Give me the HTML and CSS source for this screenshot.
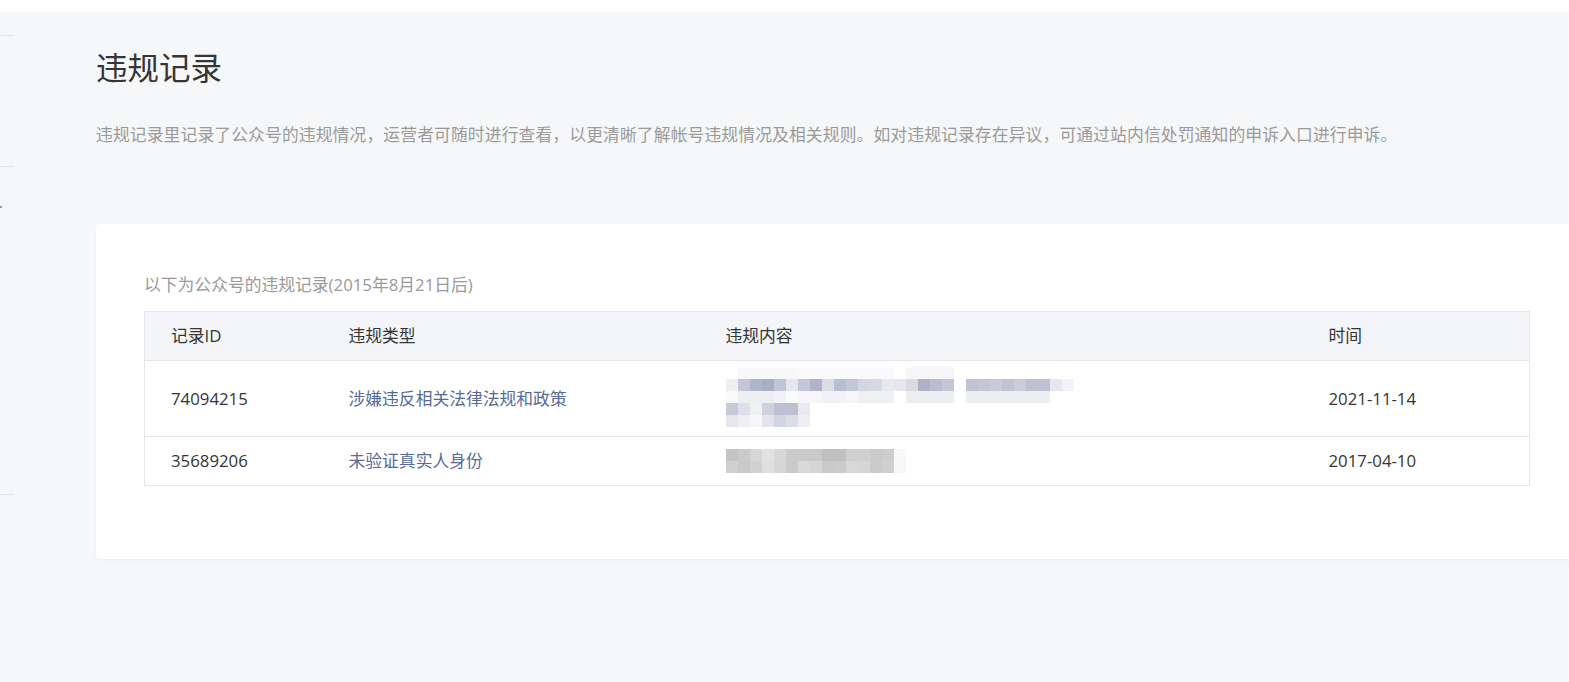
FILE: index.html
```html
<!DOCTYPE html>
<html>
<head>
    <meta charset="UTF-8">
    <title>违规记录</title>
    <link rel="stylesheet" href="styles.css">
</head>
<body>
    <div class="topbar"></div>
    <div class="layout">
        <div class="side">
            <div class="side-item first"></div>
            <div class="side-item second"></div>
            <div class="side-item third"><span class="dot"></span></div>
        </div>
        <div class="main">
            <h2 class="title">违规记录</h2>
            <p class="desc">违规记录里记录了公众号的违规情况，运营者可随时进行查看，以更清晰了解帐号违规情况及相关规则。如对违规记录存在异议，可通过站内信处罚通知的申诉入口进行申诉。</p>
            <div class="card">
                <p class="sub">以下为公众号的违规记录(2015年8月21日后)</p>
                <table class="list">
                    <colgroup>
                        <col class="c-id">
                        <col class="c-type">
                        <col class="c-content">
                        <col>
                    </colgroup>
                    <tr class="head">
                        <td>记录ID</td>
                        <td>违规类型</td>
                        <td>违规内容</td>
                        <td>时间</td>
                    </tr>
                    <tr>
                        <td>74094215</td>
                        <td><a href="#">涉嫌违反相关法律法规和政策</a></td>
                        <td class="mosaic-cell tall">
                            <!--打码内容-->
                            <svg class="mosaic" width="360" height="60" viewBox="0 0 360 60">
                                <rect x="12" y="0" width="60" height="12" fill="#f8f8fa"/>
                                <rect x="72" y="0" width="96" height="12" fill="#fafafc"/>
                                <rect x="180" y="0" width="48" height="12" fill="#f6f6f8"/>
                                <rect x="0" y="12" width="12" height="12" fill="#efeff2"/>
                                <rect x="12" y="12" width="12" height="12" fill="#c4c5d6"/>
                                <rect x="24" y="12" width="12" height="12" fill="#b0b5cb"/>
                                <rect x="36" y="12" width="12" height="12" fill="#a9adc6"/>
                                <rect x="48" y="12" width="12" height="12" fill="#c0c4d4"/>
                                <rect x="60" y="12" width="12" height="12" fill="#e6e7ee"/>
                                <rect x="72" y="12" width="12" height="12" fill="#c4c7d8"/>
                                <rect x="84" y="12" width="12" height="12" fill="#b0b3cb"/>
                                <rect x="96" y="12" width="12" height="12" fill="#dcdce4"/>
                                <rect x="108" y="12" width="12" height="12" fill="#b9bdd1"/>
                                <rect x="120" y="12" width="12" height="12" fill="#c4c7d8"/>
                                <rect x="132" y="12" width="12" height="12" fill="#d4d6e2"/>
                                <rect x="144" y="12" width="12" height="12" fill="#d6d9e4"/>
                                <rect x="156" y="12" width="12" height="12" fill="#e8e9ef"/>
                                <rect x="168" y="12" width="12" height="12" fill="#e6e7ee"/>
                                <rect x="180" y="12" width="12" height="12" fill="#d9d9e2"/>
                                <rect x="192" y="12" width="12" height="12" fill="#b0b1c9"/>
                                <rect x="204" y="12" width="12" height="12" fill="#babdd1"/>
                                <rect x="216" y="12" width="12" height="12" fill="#c4c6d6"/>
                                <rect x="240" y="12" width="12" height="12" fill="#c0c3d4"/>
                                <rect x="252" y="12" width="12" height="12" fill="#c4c6d6"/>
                                <rect x="264" y="12" width="12" height="12" fill="#c8cbd9"/>
                                <rect x="276" y="12" width="12" height="12" fill="#c1c3d4"/>
                                <rect x="288" y="12" width="12" height="12" fill="#cbcdd9"/>
                                <rect x="300" y="12" width="12" height="12" fill="#bec1d2"/>
                                <rect x="312" y="12" width="12" height="12" fill="#bfc2d3"/>
                                <rect x="324" y="12" width="12" height="12" fill="#e6e7ee"/>
                                <rect x="336" y="12" width="12" height="12" fill="#f2f3f7"/>
                                <rect x="0" y="24" width="12" height="12" fill="#f9f9fb"/>
                                <rect x="12" y="24" width="36" height="12" fill="#eeeff3"/>
                                <rect x="48" y="24" width="12" height="12" fill="#f1f2f5"/>
                                <rect x="60" y="24" width="12" height="12" fill="#fbfbfc"/>
                                <rect x="72" y="24" width="24" height="12" fill="#f5f6f8"/>
                                <rect x="96" y="24" width="24" height="12" fill="#f1f2f5"/>
                                <rect x="120" y="24" width="12" height="12" fill="#f6f6f8"/>
                                <rect x="132" y="24" width="36" height="12" fill="#eff0f3"/>
                                <rect x="180" y="24" width="48" height="12" fill="#eceef2"/>
                                <rect x="240" y="24" width="84" height="12" fill="#edeef2"/>
                                <rect x="0" y="36" width="12" height="12" fill="#c8cad9"/>
                                <rect x="12" y="36" width="12" height="12" fill="#dfe0ea"/>
                                <rect x="24" y="36" width="12" height="12" fill="#f1f1f4"/>
                                <rect x="36" y="36" width="12" height="12" fill="#cfd1dd"/>
                                <rect x="48" y="36" width="24" height="12" fill="#bdc0d2"/>
                                <rect x="72" y="36" width="12" height="12" fill="#e9eaef"/>
                                <rect x="0" y="48" width="12" height="12" fill="#e6e7ee"/>
                                <rect x="12" y="48" width="12" height="12" fill="#eff0f4"/>
                                <rect x="24" y="48" width="12" height="12" fill="#f6f6f8"/>
                                <rect x="36" y="48" width="12" height="12" fill="#e3e4eb"/>
                                <rect x="48" y="48" width="12" height="12" fill="#d3d5e2"/>
                                <rect x="60" y="48" width="12" height="12" fill="#dbdde7"/>
                                <rect x="72" y="48" width="12" height="12" fill="#eeeff3"/>
                            </svg>
                        </td>
                        <td>2021-11-14</td>
                    </tr>
                    <tr>
                        <td>35689206</td>
                        <td><a href="#">未验证真实人身份</a></td>
                        <td class="mosaic-cell">
                            <svg class="mosaic" width="180" height="24" viewBox="0 0 180 24">
                                <rect x="0" y="0" width="12" height="12" fill="#c4c4c2"/>
                                <rect x="12" y="0" width="12" height="12" fill="#cacaca"/>
                                <rect x="24" y="0" width="12" height="12" fill="#d5d6d6"/>
                                <rect x="36" y="0" width="12" height="12" fill="#e2e2e2"/>
                                <rect x="48" y="0" width="12" height="12" fill="#d8d7d5"/>
                                <rect x="60" y="0" width="36" height="12" fill="#cacaca"/>
                                <rect x="96" y="0" width="24" height="12" fill="#c1c0c1"/>
                                <rect x="120" y="0" width="24" height="12" fill="#d0d0d0"/>
                                <rect x="144" y="0" width="12" height="12" fill="#cbcbca"/>
                                <rect x="156" y="0" width="12" height="12" fill="#cccdcc"/>
                                <rect x="168" y="0" width="12" height="24" fill="#f7f8fa"/>
                                <rect x="0" y="12" width="12" height="12" fill="#d0d0ce"/>
                                <rect x="12" y="12" width="12" height="12" fill="#c9c9c9"/>
                                <rect x="24" y="12" width="12" height="12" fill="#d0d2d1"/>
                                <rect x="36" y="12" width="12" height="12" fill="#e0e0e0"/>
                                <rect x="48" y="12" width="12" height="12" fill="#d6d6d3"/>
                                <rect x="60" y="12" width="12" height="12" fill="#c9cbca"/>
                                <rect x="72" y="12" width="12" height="12" fill="#d8d9da"/>
                                <rect x="84" y="12" width="12" height="12" fill="#d6d6d4"/>
                                <rect x="96" y="12" width="12" height="12" fill="#c9c9c9"/>
                                <rect x="108" y="12" width="12" height="12" fill="#cbcbcb"/>
                                <rect x="120" y="12" width="12" height="12" fill="#d8d8d8"/>
                                <rect x="132" y="12" width="12" height="12" fill="#d6d6d6"/>
                                <rect x="144" y="12" width="12" height="12" fill="#cbcbcb"/>
                                <rect x="156" y="12" width="12" height="12" fill="#cfd1d1"/>
                            </svg>
                        </td>
                        <td>2017-04-10</td>
                    </tr>
                </table>
            </div>
        </div>
    </div>
</body>
</html>
```

FILE: styles.css
```css
* {
    margin: 0;
    padding: 0;
}
html, body {
    height: 100%;
    overflow: hidden;
}
body {
    background: #f6f7f9;
    font-family: "Open Sans", "Noto Sans CJK SC", sans-serif;
    color: #353535;
}
.topbar {
    height: 12px;
    background: #fff;
}
.layout {
    display: flex;
}
.side {
    width: 14px;
    flex-shrink: 0;
}
.side-item {
    border-bottom: 1px solid #e4e5e8;
}
.side-item.first {
    height: 23px;
}
.side-item.second {
    height: 130px;
}
.side-item.third {
    height: 288px;
    padding-top: 39px;
}
.dot {
    display: block;
    width: 2px;
    height: 2px;
    background: #9a9a9a;
}
.main {
    flex: 1;
    padding-left: 82px;
}
.title {
    margin-top: 34px;
    font-size: 31.5px;
    font-weight: normal;
    line-height: 44px;
    color: #353535;
}
.desc {
    margin-top: 33px;
    font-size: 16.8px;
    line-height: 24px;
    letter-spacing: 0.12px;
    color: #9a9a9a;
    white-space: nowrap;
}
.card {
    width: 1386px;
    margin-top: 77px;
    padding: 49px 48px 73px;
    background: #fff;
    border-radius: 4px;
    box-shadow: 0 1px 3px rgba(0, 0, 0, 0.04);
}
.sub {
    font-size: 16.8px;
    line-height: 24px;
    color: #9a9a9a;
}
.list {
    margin-top: 14px;
    width: 1386px;
    table-layout: fixed;
    border-collapse: collapse;
    border-spacing: 0;
    font-size: 16.8px;
}
.list .c-id {
    width: 178px;
}
.list .c-type {
    width: 377px;
}
.list .c-content {
    width: 603px;
}
.list td {
    border: 1px solid #e4e6eb;
    border-left: none;
    border-right: none;
    padding: 12px 26px;
    line-height: 24px;
    vertical-align: middle;
}
.list td:first-child {
    border-left: 1px solid #e4e6eb;
}
.list td:last-child {
    border-right: 1px solid #e4e6eb;
}
.list tr.head td {
    background: #f4f5f9;
}
.list a {
    color: #576b95;
    text-decoration: none;
}
.list td.mosaic-cell.tall {
    padding-top: 6px;
    padding-bottom: 9px;
}
.mosaic {
    display: block;
}
```
